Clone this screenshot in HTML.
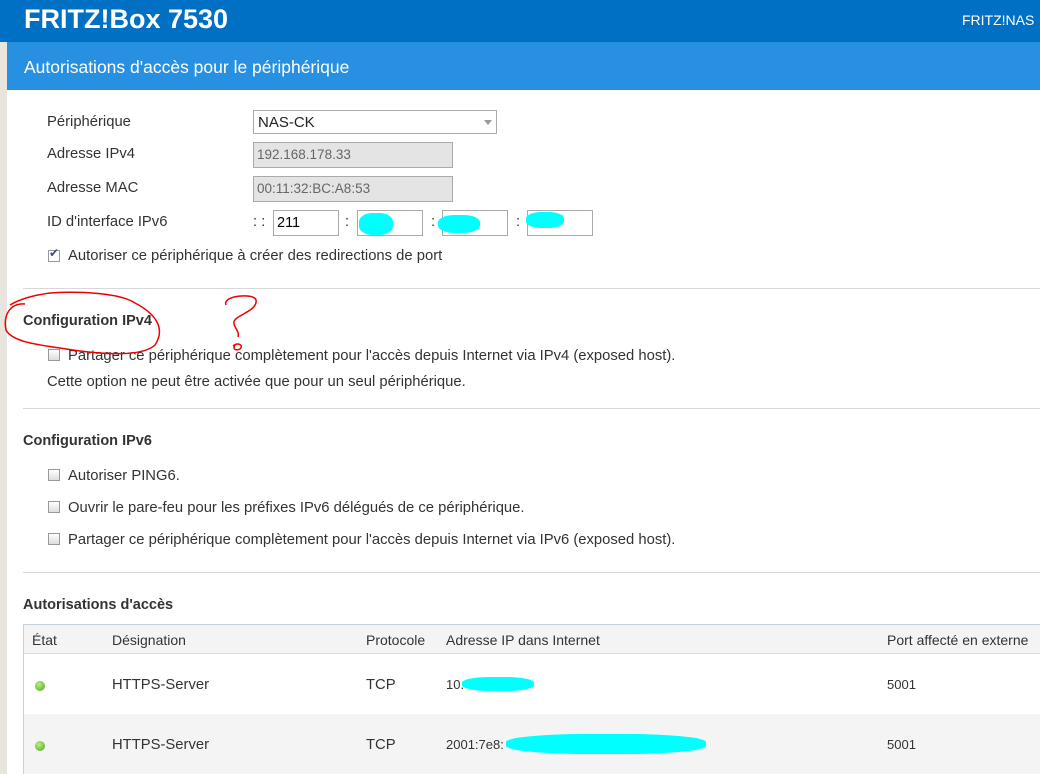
<!DOCTYPE html>
<html><head><meta charset="utf-8"><style>
*{margin:0;padding:0;box-sizing:border-box}
body{width:1040px;height:774px;overflow:hidden;background:#fff;font-family:"Liberation Sans",sans-serif;color:#333;font-size:14.8px;position:relative}
.a{position:absolute;white-space:nowrap}
.top{left:0;top:0;width:1040px;height:42px;background:#0070c4}
.side{left:0;top:42px;width:7px;height:732px;background:#e8e4de}
.sub{left:7px;top:42px;width:1033px;height:48px;background:#2890e0}
.inp{position:absolute;border:1px solid #aaa;height:26px;background:#fff;font-size:13.5px;padding:4px 3px}
.dis{background:#e4e4e4;color:#666}
.cb{position:absolute;width:12px;height:12px;border:1px solid #999;background:linear-gradient(#fff,#ddd)}
.hr{position:absolute;left:23px;right:0;height:1px;background:#d8d8d8}
.b{font-weight:bold;font-size:14.5px;color:#333}
.cy{position:absolute;background:#00ffff;border-radius:40%}
.dot{position:absolute;width:10px;height:10px;border-radius:50%;background:radial-gradient(circle at 40% 35%,#b8ef80,#4aa81c)}
</style></head><body>
<div class="a top"></div>
<div class="a" style="left:24px;top:4px;color:#fff;font-weight:bold;font-size:27px">FRITZ!Box 7530</div>
<div class="a" style="left:962px;top:12px;color:#fff;font-size:14px">FRITZ!NAS</div>
<div class="a side"></div>
<div class="a sub"></div>
<div class="a" style="left:24px;top:57px;color:#fff;font-size:17.5px">Autorisations d'accès pour le périphérique</div>

<div class="a" style="left:47px;top:114px">Périphérique</div>
<div class="inp" style="left:253px;top:110px;width:244px;height:24px;padding:3px 4px;font-size:15px;color:#222">NAS-CK<span style="position:absolute;right:4px;top:9px;border:4px solid transparent;border-top:5px solid #999"></span></div>
<div class="a" style="left:47px;top:146px">Adresse IPv4</div>
<div class="inp dis" style="left:253px;top:142px;width:200px">192.168.178.33</div>
<div class="a" style="left:47px;top:180px">Adresse MAC</div>
<div class="inp dis" style="left:253px;top:176px;width:200px">00:11:32:BC:A8:53</div>
<div class="a" style="left:47px;top:214px">ID d'interface IPv6</div>
<div class="a" style="left:253px;top:214px">: :</div>
<div class="inp" style="left:273px;top:210px;width:66px;color:#000;font-size:14.5px">211</div>
<div class="a" style="left:345px;top:214px">:</div>
<div class="inp" style="left:357px;top:210px;width:66px"></div>
<div class="cy" style="left:359px;top:213px;width:34px;height:22px"></div>
<div class="a" style="left:431px;top:214px">:</div>
<div class="inp" style="left:442px;top:210px;width:66px"></div>
<div class="cy" style="left:438px;top:215px;width:42px;height:18px"></div>
<div class="a" style="left:516px;top:214px">:</div>
<div class="inp" style="left:527px;top:210px;width:66px"></div>
<div class="cy" style="left:526px;top:212px;width:38px;height:16px"></div>
<div class="cb" style="left:48px;top:250px;background:#fff"></div>
<div class="a" style="left:49px;top:246px;color:#3a4a8a;font-size:12px">✔</div>
<div class="a" style="left:68px;top:248px">Autoriser ce périphérique à créer des redirections de port</div>

<div class="hr" style="top:288px"></div>
<div class="a b" style="left:23px;top:313px">Configuration IPv4</div>
<div class="cb" style="left:48px;top:349px"></div>
<div class="a" style="left:68px;top:348px">Partager ce périphérique complètement pour l'accès depuis Internet via IPv4 (exposed host).</div>
<div class="a" style="left:47px;top:374px">Cette option ne peut être activée que pour un seul périphérique.</div>
<svg class="a" style="left:0;top:285px" width="270" height="80" viewBox="0 0 270 80"><g fill="none" stroke="#e00" stroke-width="1.5"><path d="M25 19 C10 18 3 30 6 45 C12 57 40 60 60 63 C90 68 140 74 155 60 C165 45 158 30 135 18 C120 8 80 6 50 8 C35 10 20 14 10 20"/><path d="M226 20 C222 10 255 8 256 15 C258 26 235 30 234 37 C233 42 240 46 238 52"/><path d="M233 61 C238 57 244 60 240 64 C236 66 232 64 235 60"/></g></svg>

<div class="hr" style="top:408px"></div>
<div class="a b" style="left:23px;top:433px">Configuration IPv6</div>
<div class="cb" style="left:48px;top:469px"></div>
<div class="a" style="left:68px;top:468px">Autoriser PING6.</div>
<div class="cb" style="left:48px;top:501px"></div>
<div class="a" style="left:68px;top:500px">Ouvrir le pare-feu pour les préfixes IPv6 délégués de ce périphérique.</div>
<div class="cb" style="left:48px;top:533px"></div>
<div class="a" style="left:68px;top:532px">Partager ce périphérique complètement pour l'accès depuis Internet via IPv6 (exposed host).</div>

<div class="hr" style="top:572px"></div>
<div class="a b" style="left:23px;top:597px">Autorisations d'accès</div>
<div class="a" style="left:23px;top:624px;width:1017px;height:150px;border:1px solid #c5d2dc;border-right:none"></div>
<div class="a" style="left:24px;top:625px;width:1016px;height:29px;background:#f4f4f4;border-bottom:1px solid #ddd"></div>
<div class="a" style="left:24px;top:714px;width:1016px;height:60px;background:#f4f4f4"></div>
<div class="a" style="left:32px;top:632px;font-size:14px">État</div>
<div class="a" style="left:112px;top:632px;font-size:14px">Désignation</div>
<div class="a" style="left:366px;top:632px;font-size:14px">Protocole</div>
<div class="a" style="left:446px;top:632px;font-size:14px">Adresse IP dans Internet</div>
<div class="a" style="left:887px;top:632px;font-size:14px">Port affecté en externe</div>
<div class="dot" style="left:35px;top:681px"></div>
<div class="a" style="left:112px;top:677px">HTTPS-Server</div>
<div class="a" style="left:366px;top:677px">TCP</div>
<div class="a" style="left:446px;top:677px;font-size:13px">10.</div>
<div class="cy" style="left:462px;top:677px;width:72px;height:14px"></div>
<div class="a" style="left:887px;top:677px;font-size:13px">5001</div>
<div class="dot" style="left:35px;top:741px"></div>
<div class="a" style="left:112px;top:737px">HTTPS-Server</div>
<div class="a" style="left:366px;top:737px">TCP</div>
<div class="a" style="left:446px;top:737px;font-size:13px">2001:7e8:</div>
<div class="cy" style="left:506px;top:734px;width:200px;height:20px"></div>
<div class="a" style="left:887px;top:737px;font-size:13px">5001</div>
</body></html>
